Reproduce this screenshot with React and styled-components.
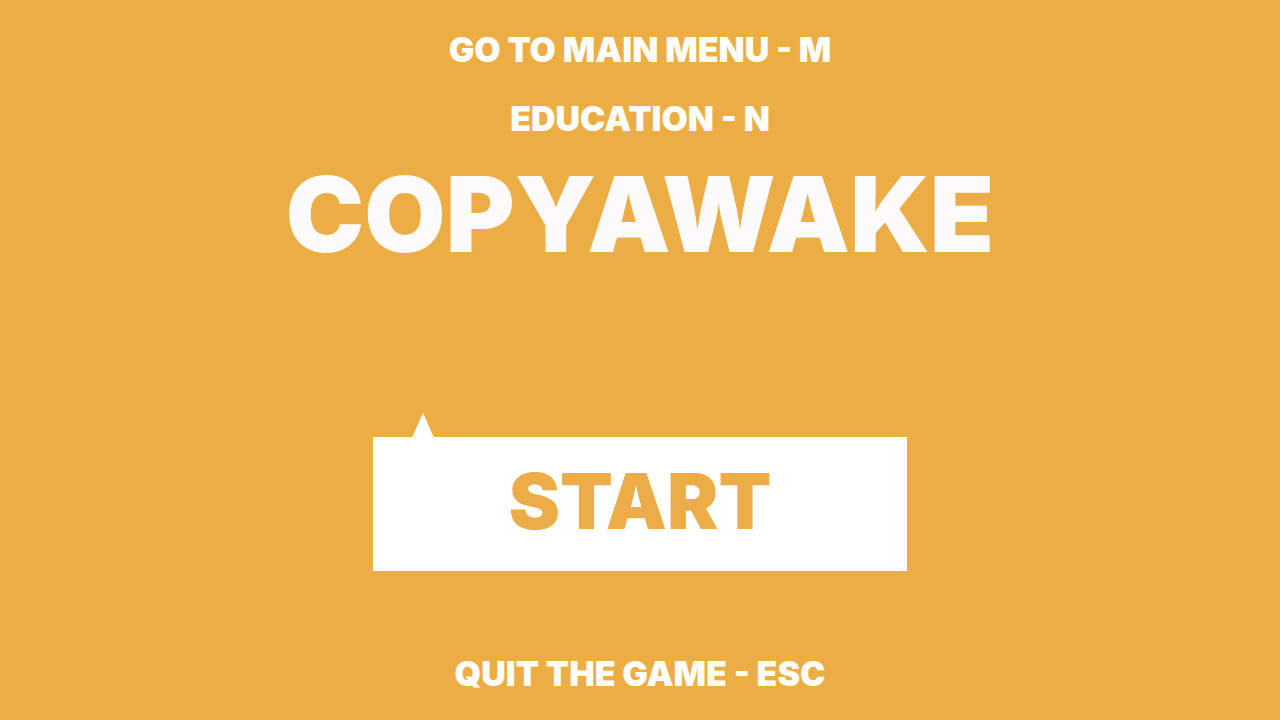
import styled, { createGlobalStyle } from 'styled-components'

const GlobalStyle = createGlobalStyle`
  * {
    box-sizing: border-box;
  }
  body {
    margin: 0;
    background-color: #ecad44;
    font-family: Inter, 'Liberation Sans', sans-serif;
    font-weight: 900;
    text-transform: uppercase;
  }
`

const Screen = styled.main`
  display: flex;
  flex-direction: column;
  align-items: center;
  min-height: 100vh;
  padding: 32px 24px 28px;
  text-align: center;
`

const Shortcuts = styled.nav`
  display: flex;
  flex-direction: column;
  align-items: center;
  gap: 33px;
`

const ShortcutButton = styled.button`
  padding: 0;
  border: none;
  background: none;
  color: #fffefa;
  font: inherit;
  font-size: 34px;
  line-height: 36px;
  text-transform: inherit;
  cursor: pointer;
`

const Title = styled.h1`
  margin: 25px 0 0;
  color: #fcfafb;
  font-size: 105px;
  font-weight: 900;
  line-height: 104px;
`

// start box sits twice as far from the title as from the bottom line
const StartArea = styled.section`
  flex: 1;
  display: grid;
  grid-template-rows: 2fr auto 1fr;
  justify-items: center;
  width: 100%;
`

const StartButton = styled.button`
  position: relative;
  grid-row: 2;
  width: 100%;
  max-width: 534px;
  padding: 16px 24px 22px;
  border: none;
  background-color: #ffffff;
  color: #ecad48;
  font: inherit;
  font-size: 77px;
  line-height: 96px;
  text-transform: inherit;
  cursor: pointer;

  /* overlaps the box by 1px so no seam shows */
  &::before {
    content: '';
    position: absolute;
    bottom: calc(100% - 1px);
    left: 39px;
    width: 22px;
    height: 25px;
    background-color: #ffffff;
    clip-path: polygon(50% 0, 100% 100%, 0 100%);
  }
`

const App = () => {
  return (
    <>
      <GlobalStyle />
      <Screen>
        <Shortcuts>
          <ShortcutButton type='button'>Go to main menu - M</ShortcutButton>
          <ShortcutButton type='button'>Education - N</ShortcutButton>
        </Shortcuts>

        <Title>Copyawake</Title>

        <StartArea>
          <StartButton type='button'>Start</StartButton>
        </StartArea>

        <ShortcutButton type='button'>Quit the game - Esc</ShortcutButton>
      </Screen>
    </>
  )
}

export default App
